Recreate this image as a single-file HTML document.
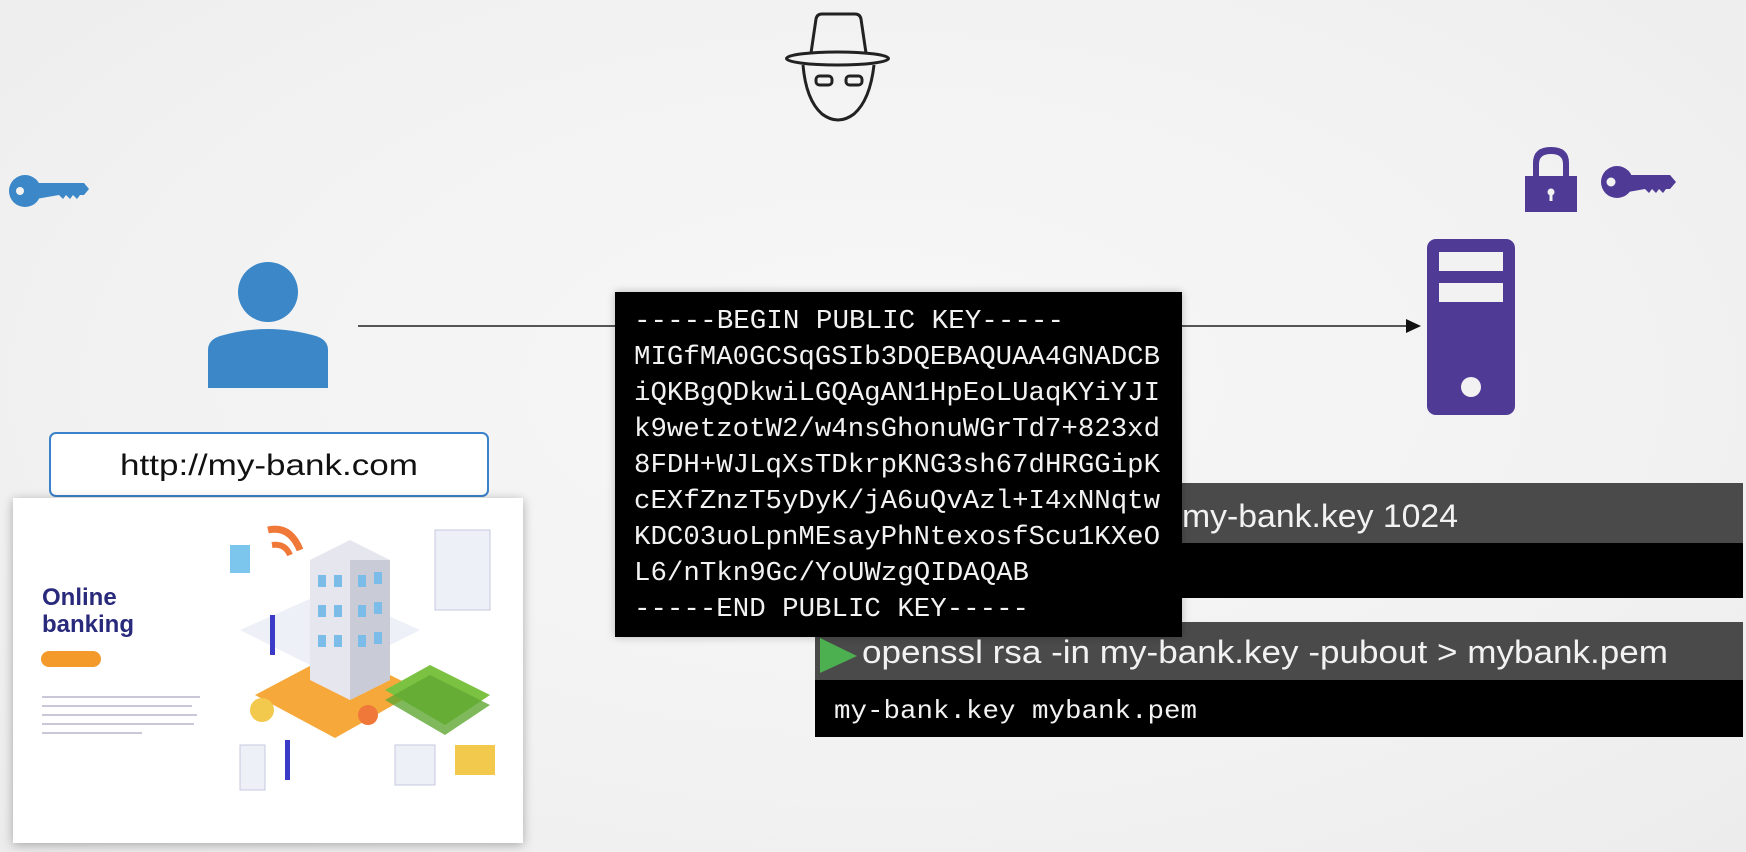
<!DOCTYPE html>
<html><head><meta charset="utf-8"><style>
html,body{margin:0;padding:0}
body{width:1746px;height:852px;overflow:hidden;background:radial-gradient(ellipse at 50% 45%,#f7f7f7 0%,#f2f2f2 60%,#ececec 100%);position:relative;font-family:"Liberation Sans",sans-serif}
.abs{position:absolute}
</style></head><body>
<svg class="abs" style="left:0;top:0" width="1746" height="852" viewBox="0 0 1746 852">
  <!-- hacker -->
  <g fill="none" stroke="#222" stroke-width="3">
    <path d="M811 53 L816 19 Q817 14 822 14 L855 14 Q860 14 861 19 L866 53"/>
    <ellipse cx="837.5" cy="58.5" rx="51" ry="6.5"/>
    <path d="M803 65 Q806 100 822 114 Q838 126 854 114 Q870 100 874 65"/>
    <rect x="816" y="76" width="16" height="9" rx="3.5"/>
    <rect x="846" y="76" width="16" height="9" rx="3.5"/>
  </g>
  <!-- left key -->
  <g fill="#3b87c8">
    <circle cx="25" cy="191" r="16"/>
    <path d="M36 183 L84 183 L89 189 L84 195 L80 195 L77 199 L73 195 L70 199 L66 195 L63 199 L59 195 L36 199 Z"/>
  </g>
  <circle cx="20" cy="191" r="4" fill="#f2f2f2"/>
  <!-- lock -->
  <g fill="#4f3a96">
    <path d="M1533 177 L1533 163 Q1533 147 1551 147 Q1569 147 1569 163 L1569 177 L1563 177 L1563 164 Q1563 154 1551 154 Q1539 154 1539 164 L1539 177 Z"/>
    <rect x="1525" y="176" width="52" height="36"/>
  </g>
  <circle cx="1551" cy="192" r="3.5" fill="#f2f2f2"/><rect x="1549.5" y="193" width="3" height="8" fill="#f2f2f2"/>
  <!-- right key -->
  <g fill="#4f3a96">
    <circle cx="1617" cy="182" r="16"/>
    <path d="M1628 175 L1670 175 L1676 182 L1670 189 L1666 189 L1663 193 L1659 189 L1656 193 L1652 189 L1649 193 L1645 189 L1628 192 Z"/>
  </g>
  <circle cx="1611" cy="182" r="4.5" fill="#f2f2f2"/>
  <!-- server -->
  <rect x="1427" y="239" width="88" height="176" rx="9" fill="#4f3a96"/>
  <rect x="1439" y="252" width="64" height="19" fill="#f2f2f2"/>
  <rect x="1439" y="283" width="64" height="19" fill="#f2f2f2"/>
  <circle cx="1471" cy="387" r="10" fill="#f2f2f2"/>
  <!-- user -->
  <g fill="#3b87c8">
    <circle cx="268" cy="292" r="30"/>
    <path d="M208 388 L208 350 Q208 340 220 336 Q245 329 268 329 Q291 329 316 336 Q328 340 328 350 L328 388 Z"/>
  </g>
  <!-- line + arrow -->
  <line x1="358" y1="326" x2="1410" y2="326" stroke="#222" stroke-width="1.5"/>
  <path d="M1406 319 L1421 326 L1406 333 Z" fill="#111"/>
</svg>

<!-- URL box -->
<div class="abs" style="left:49px;top:432px;width:436px;height:61px;border:2px solid #3a82c9;border-radius:7px;background:#fff;box-sizing:content-box"></div>
<svg class="abs" style="left:0;top:0" width="1746" height="852"><text x="120" y="475" font-family="Liberation Sans, sans-serif" font-size="30" fill="#111" textLength="298" lengthAdjust="spacingAndGlyphs">http://my-bank.com</text></svg>

<!-- card -->
<div class="abs" style="left:13px;top:498px;width:510px;height:345px;background:#fff;box-shadow:0 2px 10px rgba(0,0,0,.3)"></div>
<svg class="abs" style="left:0;top:0" width="1746" height="852">
  <text x="42" y="605" font-family="Liberation Sans, sans-serif" font-weight="bold" font-size="24" fill="#2a2a7c">Online</text>
  <text x="42" y="632" font-family="Liberation Sans, sans-serif" font-weight="bold" font-size="24" fill="#2a2a7c">banking</text>
  <rect x="41" y="651" width="60" height="16" rx="8" fill="#f39a2a"/>
  <g fill="#c8c8d8"><rect x="42" y="696" width="158" height="2"/><rect x="42" y="705" width="150" height="2"/><rect x="42" y="714" width="155" height="2"/><rect x="42" y="723" width="152" height="2"/><rect x="42" y="732" width="100" height="2"/></g>
  <!-- illustration -->
  <path d="M255 695 L340 650 L420 690 L335 738 Z" fill="#f6a83a"/>
  <path d="M240 630 L330 590 L420 630 L330 675 Z" fill="#eef0f8"/>
  <path d="M310 560 L350 540 L390 560 L390 680 L350 700 L310 680 Z" fill="#e6e6ee"/>
  <path d="M350 560 L390 560 L390 680 L350 700 Z" fill="#c9cbd6"/>
  <g fill="#7bbde8"><rect x="318" y="575" width="8" height="12"/><rect x="334" y="575" width="8" height="12"/><rect x="318" y="605" width="8" height="12"/><rect x="334" y="605" width="8" height="12"/><rect x="318" y="635" width="8" height="12"/><rect x="334" y="635" width="8" height="12"/><rect x="358" y="575" width="8" height="12"/><rect x="374" y="572" width="8" height="12"/><rect x="358" y="605" width="8" height="12"/><rect x="374" y="602" width="8" height="12"/><rect x="358" y="635" width="8" height="12"/><rect x="374" y="632" width="8" height="12"/></g>
  <path d="M385 690 L430 665 L490 695 L445 725 Z" fill="#7cc242"/>
  <path d="M385 700 L430 675 L490 705 L445 735 Z" fill="#5fa832" opacity=".8"/>
  <path d="M268 530 Q290 525 300 550" stroke="#f0793a" stroke-width="7" fill="none"/>
  <path d="M272 545 Q285 543 290 555" stroke="#f0793a" stroke-width="6" fill="none"/>
  <rect x="230" y="545" width="20" height="28" fill="#7cc6ee"/>
  <rect x="435" y="530" width="55" height="80" fill="#eef0f8" stroke="#c6c9e0"/>
  <rect x="455" y="745" width="40" height="30" fill="#f2c94c"/>
  <rect x="240" y="745" width="25" height="45" fill="#eef0f8" stroke="#c6c9e0"/>
  <circle cx="262" cy="710" r="12" fill="#f2c94c"/>
  <circle cx="368" cy="715" r="10" fill="#f0793a"/>
  <rect x="270" y="615" width="5" height="40" fill="#3b3bc8"/>
  <rect x="285" y="740" width="5" height="40" fill="#3b3bc8"/>
  <rect x="395" y="745" width="40" height="40" fill="#eef0f8" stroke="#c6c9e0"/>
</svg>

<!-- terminal bars -->
<div class="abs" style="left:1182px;top:483px;width:561px;height:60px;background:#4a4a4a"></div>
<div class="abs" style="left:1182px;top:543px;width:561px;height:55px;background:#000"></div>
<div class="abs" style="left:815px;top:622px;width:928px;height:58px;background:#4a4a4a"></div>
<div class="abs" style="left:815px;top:680px;width:928px;height:57px;background:#000"></div>

<!-- key box -->
<div class="abs" style="left:615px;top:292px;width:567px;height:345px;background:#000;box-shadow:0 0 8px rgba(0,0,0,.25)"></div>

<svg class="abs" style="left:0;top:0" width="1746" height="852">
  <g font-family="Liberation Sans, sans-serif" fill="#f2f2f2" font-size="32">
    <text x="1182" y="527" textLength="276" lengthAdjust="spacingAndGlyphs">my-bank.key 1024</text>
    <text x="862" y="663" textLength="806" lengthAdjust="spacingAndGlyphs">openssl rsa -in my-bank.key -pubout &gt; mybank.pem</text>
  </g>
  <path d="M820 638 L857 656 L820 673 Z" fill="#4caf50"/>
  <text x="834" y="718" font-family="Liberation Mono, monospace" font-size="26" fill="#f2f2f2" textLength="363" lengthAdjust="spacingAndGlyphs">my-bank.key mybank.pem</text>
  <g font-family="Liberation Mono, monospace" font-size="27" fill="#f2f2f2">
    <text x="634" y="328" textLength="430" lengthAdjust="spacingAndGlyphs">-----BEGIN PUBLIC KEY-----</text>
    <text x="634" y="364" textLength="526" lengthAdjust="spacingAndGlyphs">MIGfMA0GCSqGSIb3DQEBAQUAA4GNADCB</text>
    <text x="634" y="400" textLength="526" lengthAdjust="spacingAndGlyphs">iQKBgQDkwiLGQAgAN1HpEoLUaqKYiYJI</text>
    <text x="634" y="436" textLength="526" lengthAdjust="spacingAndGlyphs">k9wetzotW2/w4nsGhonuWGrTd7+823xd</text>
    <text x="634" y="472" textLength="526" lengthAdjust="spacingAndGlyphs">8FDH+WJLqXsTDkrpKNG3sh67dHRGGipK</text>
    <text x="634" y="508" textLength="526" lengthAdjust="spacingAndGlyphs">cEXfZnzT5yDyK/jA6uQvAzl+I4xNNqtw</text>
    <text x="634" y="544" textLength="526" lengthAdjust="spacingAndGlyphs">KDC03uoLpnMEsayPhNtexosfScu1KXeO</text>
    <text x="634" y="580" textLength="395" lengthAdjust="spacingAndGlyphs">L6/nTkn9Gc/YoUWzgQIDAQAB</text>
    <text x="634" y="616" textLength="395" lengthAdjust="spacingAndGlyphs">-----END PUBLIC KEY-----</text>
  </g>
</svg>
</body></html>
